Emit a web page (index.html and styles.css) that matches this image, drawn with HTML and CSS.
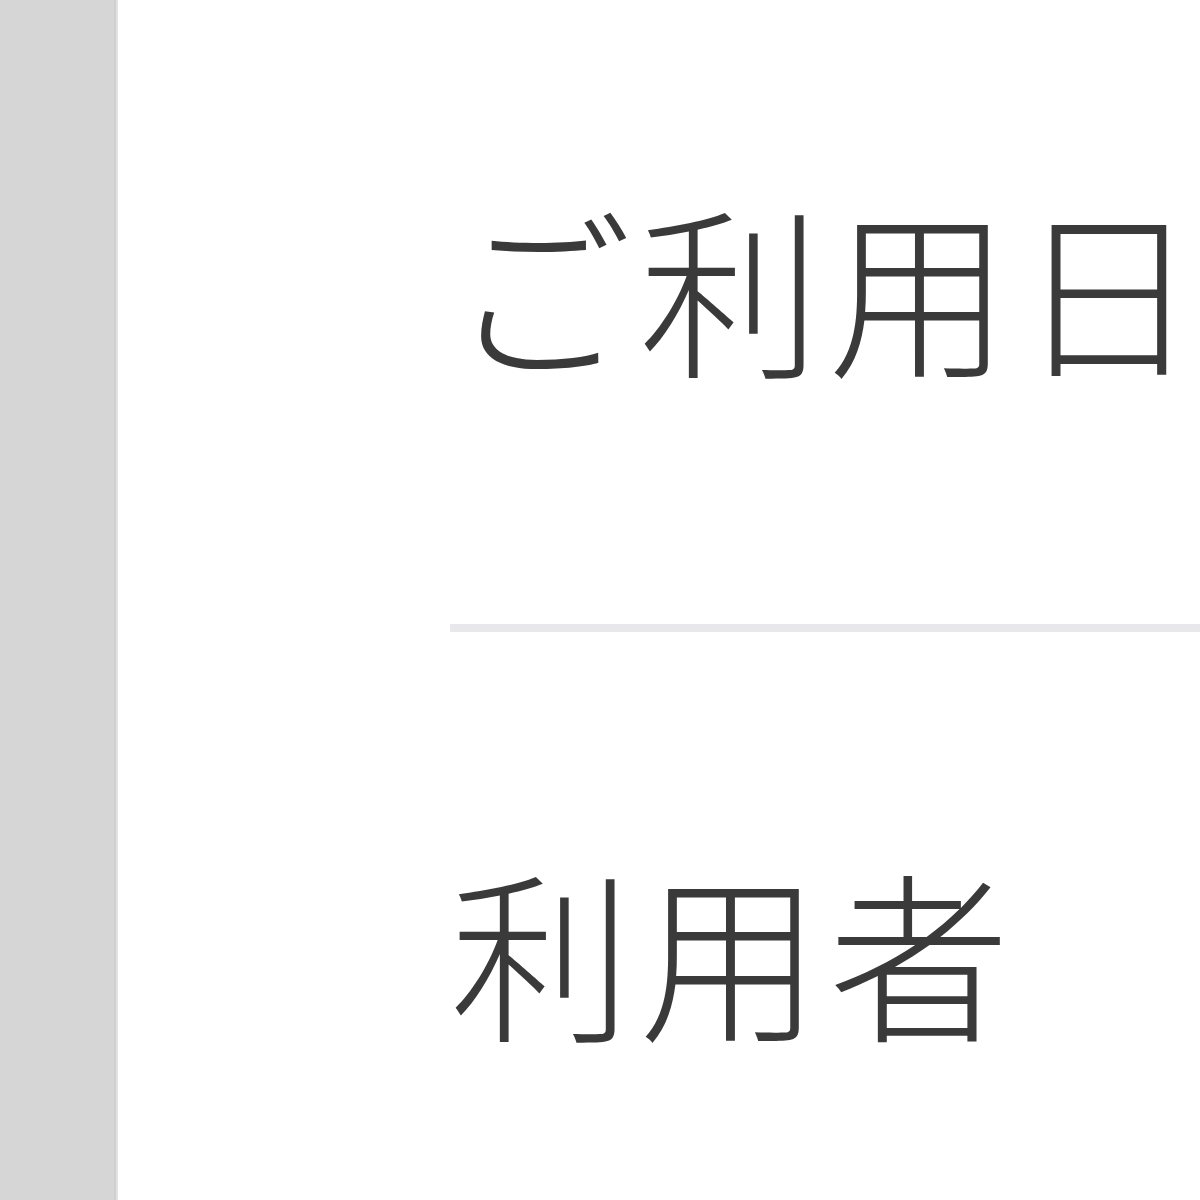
FILE: index.html
```html
<!DOCTYPE html>
<html lang="ja">
<head>
    <meta charset="UTF-8">
    <meta name="viewport" content="width=device-width, initial-scale=1.0">
    <title>ご利用情報</title>
    <link rel="stylesheet" href="styles.css">
</head>
<body>
    <div class="page">
        <aside class="sidebar"></aside>
        <main class="content">
            <div class="field">
                <span class="label">ご利用日</span>
            </div>
            <div class="field">
                <span class="label">利用者</span>
            </div>
        </main>
    </div>
</body>
</html>
```

FILE: styles.css
```css
html, body {
    margin: 0;
    height: 100%;
    overflow: hidden;
}
body {
    font-family: "Noto Sans CJK JP", "Noto Sans", sans-serif;
    background-color: #fff;
    color: #3a3a3a;
}
.page {
    display: flex;
    height: 100vh;
}
.sidebar {
    width: 114px;
    flex-shrink: 0;
    background-color: #d6d6d6;
    border-right: 2px solid #cfcfcf;
    box-shadow: 2px 0 0 #e2e2e2;
}
.content {
    flex: 1;
    min-width: 0;
    padding-left: 334px;
    margin-top: -32px;
}
.field {
    display: flex;
    align-items: center;
    height: 656px;
    border-bottom: 8px solid #e8e8eb;
}
.field:last-child {
    border-bottom: none;
}
.label {
    font-size: 182px;
    font-weight: 300;
    line-height: 1;
    letter-spacing: 7px;
    white-space: nowrap;
    padding-bottom: 22px;
}
```
